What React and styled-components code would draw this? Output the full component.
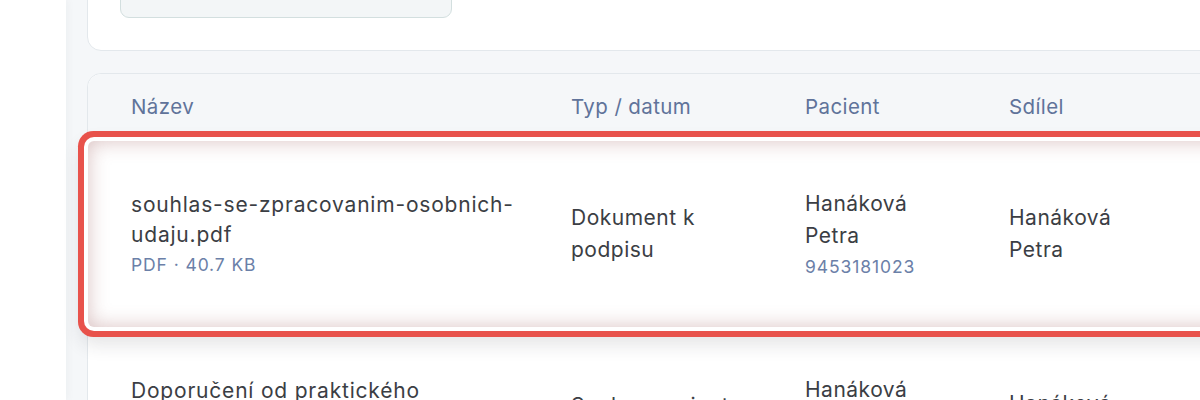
import React from "react";
import styled, { createGlobalStyle } from "styled-components";

const GlobalStyle = createGlobalStyle`
  html, body {
    margin: 0;
    padding: 0;
    background: #ffffff;
    font-family: "Inter", "Noto Sans", sans-serif;
  }
  #root {
    height: 400px;
    overflow: hidden;
  }
`;

const rows = [
  {
    id: 1,
    name: "souhlas-se-zpracovanim-osobnich-udaju.pdf",
    meta: "PDF · 40.7 KB",
    type: "Dokument k podpisu",
    patient: "Hanáková Petra",
    patientId: "9453181023",
    sharedBy: "Hanáková Petra",
    active: true,
  },
  {
    id: 2,
    name: "Doporučení od praktického lékaře_kardiologie.pdf",
    meta: "PDF · 112.4 KB",
    type: "Soubor pacienta",
    date: "14. 3. 2024",
    patient: "Hanáková Petra",
    patientId: "9453181023",
    sharedBy: "Hanáková Petra",
  },
];

export default function App() {
  return (
    <>
      <GlobalStyle />
      <Layout>
        <Sidebar />
        <Main>
          <FilterCard>
            <SearchBox />
          </FilterCard>
          <TableCard>
            <HeadRow>
              <HeadCell>Název</HeadCell>
              <HeadCell>Typ / datum</HeadCell>
              <HeadCell>Pacient</HeadCell>
              <HeadCell>Sdílel</HeadCell>
            </HeadRow>
            {rows.map((r) => (
              <Row key={r.id} $active={r.active}>
                <Cell>
                  <FileName>{r.name}</FileName>
                  <Sub>{r.meta}</Sub>
                </Cell>
                <Cell>
                  <Text>{r.type}</Text>
                  {r.date && <Sub>{r.date}</Sub>}
                </Cell>
                <Cell>
                  <Text>{r.patient}</Text>
                  <Sub>{r.patientId}</Sub>
                </Cell>
                <Cell>
                  <Text>{r.sharedBy}</Text>
                </Cell>
              </Row>
            ))}
          </TableCard>
        </Main>
      </Layout>
    </>
  );
}

const Layout = styled.div`
  display: flex;
  height: 400px;
  overflow: hidden;
`;

const Sidebar = styled.aside`
  width: 66px;
  flex-shrink: 0;
  background: #ffffff;
  box-shadow: 2px 0 8px rgba(30, 40, 60, 0.04);
  position: relative;
  z-index: 1;
`;

const Main = styled.main`
  flex: 1;
  background: #f5f7f9;
  padding-left: 21px;
  min-width: 0;
`;

const FilterCard = styled.section`
  margin-top: -51px;
  width: 1200px;
  box-sizing: border-box;
  background: #ffffff;
  border: 1px solid #e3e8ec;
  border-radius: 14px;
  padding: 20px 32px 32px;
`;

const SearchBox = styled.div`
  width: 332px;
  height: 48px;
  box-sizing: border-box;
  background: #f3f6f7;
  border: 1px solid #d3dfdf;
  border-radius: 9px;
`;

const TableCard = styled.section`
  margin-top: 22px;
  width: 1200px;
  box-sizing: border-box;
  background: #ffffff;
  border: 1px solid #e3e8ec;
  border-radius: 14px 0 0 0;
`;

const grid = `
  display: grid;
  grid-template-columns: 440px 234px 204px 204px 1fr;
  padding-left: 43px;
`;

const HeadRow = styled.div`
  ${grid}
  height: 66px;
  align-items: center;
  background: #f5f7f9;
  border-radius: 14px 0 0 0;
  border-bottom: 1px solid #e6eaee;
`;

const HeadCell = styled.div`
  font-size: 20.5px;
  color: #60739a;
  letter-spacing: 0.4px;
  padding-bottom: 2px;
`;

const Row = styled.div`
  ${grid}
  align-items: center;
  min-height: 186px;
  background: #ffffff;
  position: relative;
  border-radius: ${(p) => (p.$active ? "6px" : "0")};
  box-shadow: ${(p) =>
    p.$active
      ? "inset 0 0 20px rgba(150, 80, 80, 0.36), 0 0 0 4px #ffffff, 0 0 0 10px #e8524b, 0 10px 18px 8px rgba(40, 40, 50, 0.12)"
      : "none"};
  z-index: ${(p) => (p.$active ? 2 : 0)};
`;

const Cell = styled.div`
  display: flex;
  flex-direction: column;
  padding-right: 52px;
`;

const Text = styled.div`
  font-size: 21px;
  line-height: 32px;
  color: #3b3e44;
  letter-spacing: 0.5px;
`;

const FileName = styled(Text)`
  line-height: 30px;
  letter-spacing: 0.8px;
`;

const Sub = styled.div`
  font-size: 17.5px;
  line-height: 29px;
  color: #6b80a8;
  letter-spacing: 0.9px;
`;
